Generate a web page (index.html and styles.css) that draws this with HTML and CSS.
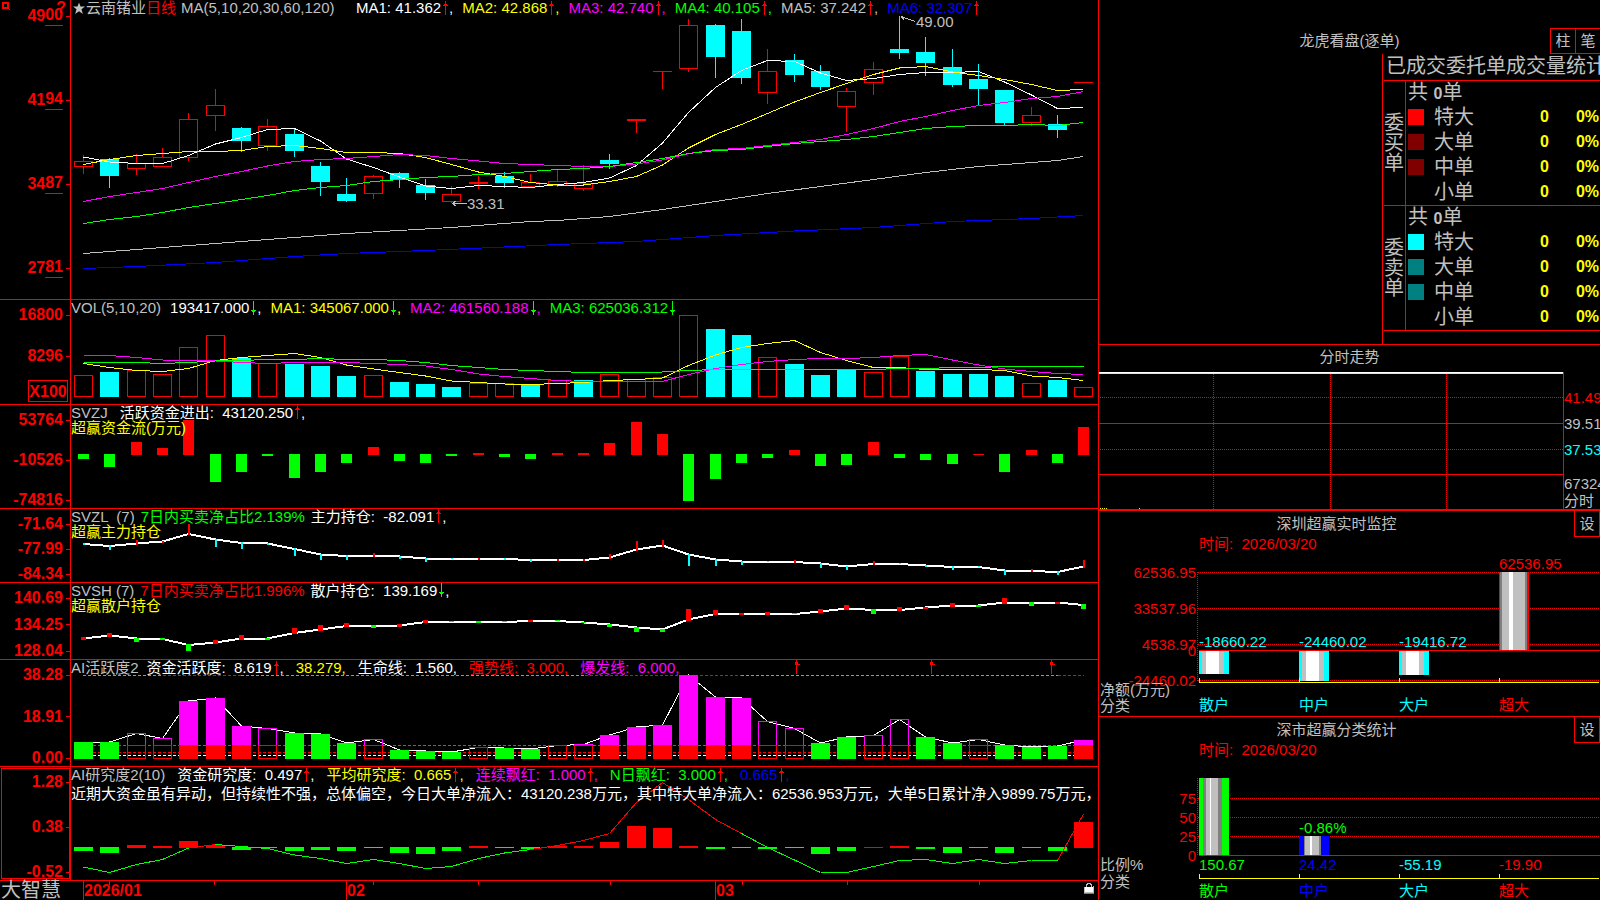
FILE: index.html
```html
<!DOCTYPE html>
<html lang="zh-CN">
<head>
<meta charset="utf-8">
<title>大智慧 - 云南锗业 日线</title>
<link rel="stylesheet" href="styles.css">
</head>
<body>
<svg class="defs" aria-hidden="true">
  <symbol id="up" viewBox="0 0 8 15"><path d="M4.5 0V14" stroke="#f00"/><path d="M4 1h1v2h1v1h1v1h-5v-1h1v-1h1z" fill="#f00"/></symbol>
  <symbol id="down" viewBox="0 0 8 15"><path d="M4.5 0V14" stroke="#0f0"/><path d="M4 13h1v-2h1v-1h1v-1h-5v1h1v1h1z" fill="#0f0"/></symbol>
</svg>

<div class="terminal">
  <main class="charts">
    <section class="panel">
      <div class="axis axis-price">
        <svg class="marker" viewBox="0 0 70 16" aria-hidden="true"><rect x="3" y="3" width="5" height="5" fill="none" stroke="#f00" stroke-width="2"/><path d="M9 9h1v1h-1z" fill="#f00"/></svg>
        <b class="help">?</b>
        <span class="tick">49<u>00</u></span><span class="tick">41<u>94</u></span><span class="tick">34<u>87</u></span><span class="tick">27<u>81</u></span>
      </div>
      <div class="plot">
        <svg id="price" viewBox="71 0 1027 299" preserveAspectRatio="none"></svg>
        <header class="legend">
          <h1><svg class="star" viewBox="0 0 12 14"><path d="M6 1.500l1.500 4H12L8.500 8.300 9.800 13 6 10.300 2.200 13 3.500 8.300 0 5.500h4.500z" fill="#c0c0c0"/></svg>云南锗业<span class="red">日线</span></h1>
          <span class="params">MA(5,10,20,30,60,120)</span>
          <span class="white">MA1: 41.362<svg class="arrow"><use href="#up"/></svg>,</span>
          <span class="yellow">MA2: 42.868<svg class="arrow"><use href="#up"/></svg>,</span>
          <span class="magenta">MA3: 42.740<svg class="arrow"><use href="#up"/></svg>,</span>
          <span class="green">MA4: 40.105<svg class="arrow"><use href="#up"/></svg>,</span>
          <span>MA5: 37.242<svg class="arrow"><use href="#up"/></svg>,</span>
          <span class="blue">MA6: 32.307<svg class="arrow"><use href="#up"/></svg></span>
        </header>
      </div>
    </section>

    <section class="panel">
      <div class="axis axis-volume">
        <span class="tick">16800</span><span class="tick">8296</span><span class="unit">X100</span>
      </div>
      <div class="plot">
        <svg id="volume" viewBox="71 300 1027 104" preserveAspectRatio="none"></svg>
        <header class="legend">
          <span>VOL(5,10,20)</span>
          <span class="white">193417.000<svg class="arrow"><use href="#down"/></svg>,</span>
          <span class="yellow">MA1: 345067.000<svg class="arrow"><use href="#down"/></svg>,</span>
          <span class="magenta">MA2: 461560.188<svg class="arrow"><use href="#down"/></svg>,</span>
          <span class="green">MA3: 625036.312<svg class="arrow"><use href="#down"/></svg></span>
        </header>
      </div>
    </section>

    <section class="panel">
      <div class="axis"><span class="tick">53764</span><span class="tick">-10526</span><span class="tick">-74816</span></div>
      <div class="plot">
        <svg id="flow" viewBox="71 405 1027 103" preserveAspectRatio="none"></svg>
        <header class="legend tight">
          <span class="spaced">SVZJ</span>
          <span class="white">活跃资金进出:  43120.250<svg class="arrow"><use href="#up"/></svg>,</span>
          <p class="yellow">超赢资金流(万元)</p>
        </header>
      </div>
    </section>

    <section class="panel">
      <div class="axis"><span class="tick">-71.64</span><span class="tick">-77.99</span><span class="tick">-84.34</span></div>
      <div class="plot">
        <svg id="main-hold" viewBox="71 509 1027 73" preserveAspectRatio="none"></svg>
        <header class="legend tight">
          <span>SVZL  (7)</span>
          <span class="green">7日内买卖净占比2.139%</span>
          <span class="white">主力持仓:  -82.091<svg class="arrow"><use href="#up"/></svg>,</span>
          <p class="yellow">超赢主力持仓</p>
        </header>
      </div>
    </section>

    <section class="panel">
      <div class="axis"><span class="tick">140.69</span><span class="tick">134.25</span><span class="tick">128.04</span></div>
      <div class="plot">
        <svg id="retail-hold" viewBox="71 583 1027 76" preserveAspectRatio="none"></svg>
        <header class="legend tight">
          <span>SVSH (7)</span>
          <span class="red">7日内买卖净占比1.996%</span>
          <span class="white">散户持仓:  139.169<svg class="arrow"><use href="#down"/></svg>,</span>
          <p class="yellow">超赢散户持仓</p>
        </header>
      </div>
    </section>

    <section class="panel">
      <div class="axis"><span class="tick">38.28</span><span class="tick">18.91</span><span class="tick">0.00</span></div>
      <div class="plot">
        <svg id="activity" viewBox="71 660 1027 106" preserveAspectRatio="none"></svg>
        <header class="legend wide">
          <span class="close">AI活跃度2</span>
          <span class="white">资金活跃度:  8.619<svg class="arrow"><use href="#up"/></svg>,</span>
          <span class="yellow">38.279,</span>
          <span class="white">生命线:  1.560,</span>
          <span class="red">强势线:  3.000,</span>
          <span class="magenta">爆发线:  6.000,</span>
        </header>
      </div>
    </section>

    <section class="panel">
      <div class="axis selected"><span class="tick">1.28</span><span class="tick">0.38</span><span class="tick">-0.52</span></div>
      <div class="plot">
        <svg id="research" viewBox="71 767 1027 113" preserveAspectRatio="none"></svg>
        <header class="legend wide">
          <span>AI研究度2(10)</span>
          <span class="white">资金研究度:  0.497<svg class="arrow"><use href="#up"/></svg>,</span>
          <span class="yellow">平均研究度:  0.665<svg class="arrow"><use href="#up"/></svg>,</span>
          <span class="magenta">连续飘红:  1.000<svg class="arrow"><use href="#up"/></svg>,</span>
          <span class="green">N日飘红:  3.000<svg class="arrow"><use href="#up"/></svg>,</span>
          <span class="blue">0.665<svg class="arrow"><use href="#up"/></svg>,</span>
          <p class="comment white">近期大资金虽有异动，但持续性不强，总体偏空，今日大单净流入：43120.238万元，其中特大单净流入：62536.953万元，大单5日累计净入9899.75万元，</p>
        </header>
      </div>
    </section>

    <footer class="timeline">
      <strong class="brand">大智慧</strong>
      <div class="dates">
        <svg id="dates" viewBox="71 881 1027 19" preserveAspectRatio="none"></svg>
        <ol class="months"><li>2026/01</li><li>02</li><li>03</li></ol>
        <svg class="lock" viewBox="0 0 11 12" aria-label="锁定"><path d="M3.500 5V2.500h1V1.500h3v1h1V5" fill="none" stroke="#c0c0c0"/><path d="M2 5h8v5H2z" fill="#fff"/><path d="M1 5.500h1M1.500 5v5h9V4" fill="none" stroke="#c0c0c0"/><path d="M1 11.500h10" stroke="#808080"/></svg>
      </div>
    </footer>
  </main>

  <aside class="side">
    <section class="orders">
      <header class="orders-head">
        <h2>龙虎看盘(逐单)</h2>
        <div class="switch"><button type="button">柱</button><button type="button">笔</button></div>
      </header>
      <div class="stats">
        <table>
          <caption>已成交委托单成交量统计</caption>
          <colgroup><col class="c-side"><col class="c-key"><col class="c-name"><col class="c-count"><col class="c-pct"></colgroup>
          <tbody>
            <tr><th class="side-label" rowspan="5" scope="rowgroup">委买单</th><td class="total" colspan="4">共 <b>0</b>单</td></tr>
            <tr><td class="key"><i class="swatch s-red"></i></td><th scope="row">特大</th><td class="count">0</td><td class="pct">0%</td></tr>
            <tr><td class="key"><i class="swatch s-maroon"></i></td><th scope="row">大单</th><td class="count">0</td><td class="pct">0%</td></tr>
            <tr><td class="key"><i class="swatch s-maroon"></i></td><th scope="row">中单</th><td class="count">0</td><td class="pct">0%</td></tr>
            <tr><td class="key"></td><th scope="row">小单</th><td class="count">0</td><td class="pct">0%</td></tr>
          </tbody>
          <tbody>
            <tr><th class="side-label" rowspan="5" scope="rowgroup">委卖单</th><td class="total" colspan="4">共 <b>0</b>单</td></tr>
            <tr><td class="key"><i class="swatch s-cyan"></i></td><th scope="row">特大</th><td class="count">0</td><td class="pct">0%</td></tr>
            <tr><td class="key"><i class="swatch s-teal"></i></td><th scope="row">大单</th><td class="count">0</td><td class="pct">0%</td></tr>
            <tr><td class="key"><i class="swatch s-teal"></i></td><th scope="row">中单</th><td class="count">0</td><td class="pct">0%</td></tr>
            <tr><td class="key"></td><th scope="row">小单</th><td class="count">0</td><td class="pct">0%</td></tr>
          </tbody>
        </table>
      </div>
    </section>

    <section class="intraday">
      <h2>分时走势</h2>
      <svg viewBox="1099 372 501 137" preserveAspectRatio="none">
        <g stroke="#f00" fill="none">
          <path d="M1099 423.500H1563M1099 474.500H1563M1563.500 372V509"/>
          <path stroke-dasharray="1 1" d="M1100 397.500H1563M1100 449.500H1563M1213.500 374V509M1330.500 374V509M1446.500 374V509"/>
        </g>
        <path d="M1099 372.500H1563" stroke="#fff"/><path d="M1099 373.500H1563" stroke="#ff0"/>
        <path d="M1100 508.500h8M1139 508.500h1" stroke="#ff0" stroke-dasharray="1 1"/>
        <g class="label">
          <text x="1564" y="403" fill="#f00">41.49</text>
          <text x="1564" y="429">39.51</text>
          <text x="1564" y="455" fill="#0ff">37.53</text>
          <text x="1564" y="489">67324</text>
          <text x="1564" y="506">分时</text>
        </g>
      </svg>
    </section>

    <section class="stat">
      <header><h2>深圳超赢实时监控</h2><button type="button">设</button></header>
      <svg viewBox="1099 536 501 180" preserveAspectRatio="none">
        <g stroke="#f00" fill="none">
          <path stroke-dasharray="1 1" d="M1198 572.500H1600M1198 608.500H1600M1198 644.500H1600M1198 680.500H1600M1197.500 572V681"/>
          <path d="M1199 650.500H1600"/>
        </g>
        <g id="net-bars"></g>
        <path d="M1199.500 678V682.500H1599M1299.500 678v4M1399.500 678v4M1499.500 678v4" stroke="#ff0" fill="none"/>
        <g class="label">
          <text x="1199" y="549" fill="#f00">时间:  2026/03/20</text>
          <g fill="#f00" text-anchor="end"><text x="1196" y="578">62536.95</text><text x="1196" y="614">33537.96</text><text x="1196" y="650">4538.97</text><text x="1196" y="656">0</text><text x="1196" y="686">-24460.02</text></g>
          <text x="1100" y="695">净额(万元)</text><text x="1100" y="711">分类</text>
          <g fill="#0ff"><text x="1199" y="647">-18660.22</text><text x="1299" y="647">-24460.02</text><text x="1399" y="647">-19416.72</text><text x="1199" y="710">散户</text><text x="1299" y="710">中户</text><text x="1399" y="710">大户</text></g>
          <g fill="#f00"><text x="1499" y="569">62536.95</text><text x="1499" y="710">超大</text></g>
        </g>
      </svg>
    </section>

    <section class="stat last">
      <header><h2>深市超赢分类统计</h2><button type="button">设</button></header>
      <svg viewBox="1099 742 501 158" preserveAspectRatio="none">
        <g stroke="#f00" fill="none">
          <path stroke-dasharray="1 1" d="M1198 798.500H1600M1198 817.500H1600M1198 836.500H1600M1197.500 778V855"/>
          <path d="M1199 855.500H1600"/>
        </g>
        <g id="ratio-bars"></g>
        <path d="M1199.500 874V878.500H1599M1299.500 874v4M1399.500 874v4M1499.500 874v4" stroke="#ff0" fill="none"/>
        <g class="label">
          <text x="1199" y="755" fill="#f00">时间:  2026/03/20</text>
          <g fill="#f00" text-anchor="end"><text x="1196" y="804">75</text><text x="1196" y="823">50</text><text x="1196" y="842">25</text><text x="1196" y="861">0</text></g>
          <text x="1100" y="870">比例%</text><text x="1100" y="887">分类</text>
          <g fill="#0f0"><text x="1299" y="833">-0.86%</text><text x="1199" y="870">150.67</text><text x="1199" y="896">散户</text></g>
          <g fill="#00f"><text x="1299" y="870">24.42</text><text x="1299" y="896">中户</text></g>
          <g fill="#0ff"><text x="1399" y="870">-55.19</text><text x="1399" y="896">大户</text></g>
          <g fill="#f00"><text x="1499" y="870">-19.90</text><text x="1499" y="896">超大</text></g>
        </g>
      </svg>
    </section>
  </aside>
</div>
<script src="charts.js"></script>
</body>
</html>
```
FILE: styles.css
```css
* { box-sizing: border-box; }
body {
  margin: 0;
  background: #000;
  color: #c0c0c0;
  font: 15px/16px "Liberation Sans", "Noto Sans CJK SC", sans-serif;
}
h1, h2, p, ol { margin: 0; padding: 0; font-size: inherit; font-weight: normal; list-style: none; }
svg { display: block; shape-rendering: crispEdges; }
.defs { position: absolute; width: 0; height: 0; }

.white { color: #fff; }
.yellow { color: #ff0; }
.magenta { color: #f0f; }
.green { color: #0f0; }
.blue { color: #00f; }
.red { color: #f00; }

.terminal {
  display: grid;
  grid-template-columns: minmax(0, 1fr) 502px;
  height: 100vh;
  min-height: 720px;
  overflow: hidden;
}
.charts {
  display: grid;
  grid-template-rows: 300fr 105fr 104fr 74fr 77fr 107fr 114fr 19fr;
  min-height: 0;
}
.panel {
  display: grid;
  grid-template-columns: 71px minmax(0, 1fr);
  min-height: 0;
  border-bottom: 1px solid #f00;
}

/* value axis */
.axis {
  position: relative;
  display: flex;
  flex-direction: column;
  justify-content: space-between;
  padding-top: 7px;
  border-right: 1px solid #f00;
  color: #f00;
  font-size: 16px;
  font-weight: bold;
  text-align: right;
}
.tick { display: flex; justify-content: flex-end; align-items: center; height: 16px; }
.tick::after { content: ""; width: 4px; height: 1px; margin-left: 3px; background: #f00; }
.tick u { height: 20px; border-bottom: 1px solid #f00; text-decoration: none; line-height: 18px; }
.axis-price { padding: 8px 0 23px; }
.axis-volume { display: grid; grid-template: 41fr 32fr 22px / 1fr; justify-content: stretch; padding-bottom: 2px; }
.unit { justify-self: end; width: 40px; margin-right: 2px; border: 1px solid #f00; line-height: 21px; text-align: center; }
.selected { outline: 1px solid #f00; outline-offset: -2px; }
.marker { position: absolute; top: 0; left: 0; width: 70px; height: 16px; }
.help { position: absolute; top: 0; right: 4px; }

/* plot area with its legend laid over it */
.plot, .dates { display: grid; grid-template: minmax(0, 1fr) / minmax(0, 1fr); min-height: 0; overflow: hidden; }
.plot > *, .dates > * { grid-area: 1 / 1; min-height: 0; }
.plot > svg, .dates > svg { width: 100%; height: 100%; }
.legend {
  display: flex;
  flex-wrap: wrap;
  align-content: flex-start;
  gap: 0 9px;
  white-space: nowrap;
}
.legend > * { display: flex; align-items: center; height: 16px; }
.legend.tight { column-gap: 6px; }
.legend.tight > * { height: 15px; }
.legend.wide { column-gap: 12px; }
.legend > p { flex-basis: 100%; }
.legend > span { white-space: pre; }
.legend .spaced { margin-right: 6px; }
.legend .close { margin-right: -4px; }
.legend h1 { margin-right: -4px; }
.legend .params { width: 166px; }
.legend .comment { height: 20px; padding-top: 2px; }
.arrow { width: 8px; height: 15px; }
.star { width: 12px; height: 14px; margin: 0 1px 0 2px; shape-rendering: auto; }

/* time axis */
.timeline { display: grid; grid-template-columns: 71px minmax(0, 1fr); }
.brand { padding-left: 1px; font-size: 20px; line-height: 19px; font-weight: normal; }
.months {
  display: grid;
  grid-template-columns: 263fr 369fr 383fr;
  padding-left: 12px;
  color: #f00;
  font-size: 16px;
  font-weight: bold;
  line-height: 19px;
}
.months li { border-left: 1px solid #f00; }
.lock { justify-self: end; }
.dates > .lock { width: 11px; height: 12px; margin: 1px 4px 0 0; }

/* right column */
.side {
  display: grid;
  grid-template-rows: 345fr 166fr 206fr 183fr;
  min-width: 0;
  min-height: 0;
  border-left: 1px solid #f00;
}
.side > section { min-height: 0; overflow: hidden; }
.side button {
  padding: 0;
  border: 1px solid #f00;
  border-radius: 0;
  background: #000;
  color: #c0c0c0;
  font: inherit;
}
.side h2 { text-align: center; }
.label { fill: #c0c0c0; font-size: 15px; }
.label text { white-space: pre; }

.orders { display: flex; flex-direction: column; border-bottom: 1px solid #f00; }
.orders-head { display: grid; grid-template-columns: 50px 1fr 50px; flex: none; height: 54px; padding-top: 28px; }
.orders-head h2 { grid-column: 2; line-height: 26px; }
.switch { display: flex; }
.switch button { width: 26px; height: 26px; flex: none; }
.switch button + button { margin-left: -1px; }
.stats { flex: 1; align-self: flex-end; width: 218px; border-left: 1px solid #f00; padding-left: 1px; overflow: hidden; white-space: nowrap; }
.stats table { width: 222px; table-layout: fixed; border-collapse: separate; border-spacing: 0; font-size: 20px; line-height: 20px; border-bottom: 1px solid #f00; }
.c-side { width: 22px; }
.c-key { width: 28px; }
.c-name { width: 60px; }
.c-count { width: 55px; }
.stats caption { height: 26px; padding-left: 2px; line-height: 24px; text-align: left; }
.stats th { padding: 0 0 2px; font-weight: normal; text-align: left; }
.stats td { height: 25px; padding: 0 0 2px; }
.stats tr:first-child > * { border-top: 1px solid #f00; padding-bottom: 0; }
.stats .side-label { padding: 0 1px 0 0; border-right: 1px solid #f00; white-space: normal; }
.stats .total { padding-left: 2px; }
.stats b { font-size: 16px; }
.stats .key { padding-left: 2px; }
.stats .count, .stats .pct { color: #ff0; font-size: 16px; font-weight: bold; text-align: right; }
.stats .pct { padding-right: 7px; }
.swatch { display: block; width: 16px; height: 16px; }
.s-red { background: #f00; }
.s-maroon { background: #800000; }
.s-cyan { background: #0ff; }
.s-teal { background: #008080; }

.intraday { display: grid; grid-template-rows: 27fr 137fr; border-bottom: 2px solid #f00; }
.intraday h2 { padding-top: 4px; }
.intraday svg, .stat svg { width: 100%; height: 100%; min-height: 0; }
.stat { display: grid; grid-template-rows: 25px minmax(0, 1fr); border-bottom: 1px solid #f00; }
.stat.last { border-bottom: 0; }
.stat header { display: grid; grid-template-columns: 1fr 26px; line-height: 25px; }
.stat button { border-top: 0; }
```
FILE: charts.js
```js
const RED = "#f00", CYAN = "#0ff", GREEN = "#0f0", MAGENTA = "#f0f", GREY = "#c0c0c0", DARK = "#808080", WHITE = "#fff", YELLOW = "#ff0", BLUE = "#00f";
const x = i => Math.round(83 + 26.32 * i) + 0.5;
const box = (left, top, w, h, fill) => `<rect x="${left}" y="${top}" width="${w}" height="${h}" fill="${fill}"/>`;
const frame = (i, top, bottom, color) => `<rect x="${x(i) - 9}" y="${top}" width="18" height="${bottom - top}" fill="none" stroke="${color}"/>`;
const path = (points, color, width = 1) => `<path d="M${points.map(p => p.join(" ")).join("L")}" fill="none" stroke="${color}" stroke-width="${width}"/>`;
const line = (values, color, width) => path(values.map((v, i) => [x(i), v]), color, width);
const sparse = (pairs, color) => path(pairs.map(([i, v]) => [x(i), v]), color);
const draw = (id, html) => { document.getElementById(id).innerHTML = html; };

// kind, body top, body bottom, high, low
const candles = [
  ["r",161.5,166.5,155,174],["c",159,176,158,188],["r",163.5,168.5,154,175],["r",157.5,166.5,148,166],["r",119.5,157.5,113,161],
  ["r",105.5,115.5,89,131],["c",128,141,127,152],["r",126.5,145.5,119,151],["c",134,151,129,157],["c",166,182,162,196],
  ["c",194,201,178,202],["r",176.5,193.5,175,199],["c",173,180,172,188],["c",185,193,179,200],["r",194.5,201.5,186,203],
  ["r",182.5,183.5,176,189],["c",176,183,172,188],["r",182.5,186.5,174,187],["r",181.5,185.5,170,187],["r",183.5,188.5,165,191],
  ["c",160,164,154,169],["r",119.5,120.5,119,133],["r",71.5,71.5,71,89],["r",25.5,68.5,19,72],["c",25,57,24,78],
  ["c",31,78,19,84],["r",71.5,92.5,49,104],["c",60,75,54,82],["c",71,87,65,90],["r",91.5,106.5,88,132],
  ["r",69.5,82.5,62,95],["c",49,53,16,59],["c",52,63,37,76],["c",67,85,49,87],["c",79,89,64,105],
  ["c",90,123,90,125],["r",115.5,122.5,107,126],["c",124,130,115,138],["r",82.5,82.5,82,83]
];
let html = candles.map(([kind, top, bottom, high, low], i) => kind === "c"
  ? path([[x(i), high], [x(i), low]], CYAN) + box(x(i) - 9.5, top, 19, bottom - top, CYAN)
  : path([[x(i), high], [x(i), top]], RED) + path([[x(i), bottom], [x(i), low]], RED) +
    (top === bottom ? path([[x(i) - 9.5, top], [x(i) + 9.5, top]], RED) : frame(i, top, bottom, RED))
).join("");
html += sparse([[0,268.5],[2,266.5],[5,262.5],[8,256.5],[10,253.5],[13,250.5],[16,247],[18,244.5],[21,241.5],[24,235.5],[27,231],[30,227.5],[33,221.5],[36,218.5],[38,215.5]], BLUE);
html += sparse([[0,253.5],[5,243.5],[10,233.5],[14,227.5],[17,221.5],[18,220.5],[20,216.5],[22,209.5],[24,201.5],[26,193.5],[28,186.5],[30,179.5],[32,172.5],[34,166.5],[36,162.5],[37,160.5],[38,156.5]], GREY);
html += line([157,162,163.5,163.5,155.5,144,137.5,129.5,128.5,141,159,167.5,177,186,188.5,185.5,186.5,187.5,184.5,182.5,178,165.5,143,112.5,87.5,70.5,60.5,61.5,73,80.5,78.5,74.5,72.5,72.5,71.5,82,95,108.5,107.5], WHITE);
html += line([164.5,159.5,155.5,153.5,151.5,151.5,150.5,146.5,145.5,148.5,152.5,152.5,153.5,157.5,164.5,172,176.5,182.5,185,185,181.5,176.5,165,148,134.5,124.5,113.5,102,92.5,83.5,74.5,68,66.5,72,75.5,79.5,84.5,90.5,89.5], YELLOW);
html += line([201.5,196.5,192.5,188.5,182.5,176.5,171.5,166,161.5,159.5,158.5,156.5,154.5,155.5,158.5,161,163.5,164.5,165.5,166.5,166.5,164,160,153.5,149.5,148.5,145.5,142.5,139.5,134.5,128.5,121.5,116.5,110.5,105.5,102.5,98.5,96.5,91.5], MAGENTA);
html += line([223.5,219.5,216.5,212.5,207.5,203.5,199.5,195.5,190.5,187.5,185.5,181.5,179.5,177.5,176.5,174.5,173.5,171.5,169.5,168.5,166.5,162.5,158.5,153.5,150.5,149.5,146.5,143.5,141.5,139.5,136.5,132.5,128.5,126.5,125.5,125.5,124.5,125.5,122.5], GREEN);
html += `<path d="M901 16.500L915 21.500M901 16.500l3 3M467 203.500H452.500l4-3M452.500 203.500l4 3" fill="none" stroke="${GREY}"/>`;
html += `<g class="label"><text x="916" y="27">49.00</text><text x="467" y="209">33.31</text></g>`;
draw("price", html);

const volumes = [375.5,372,370.5,374.5,347.5,335.5,358,363.5,364,366,376,375.5,382,384,387,383.5,383.5,385,380.5,380,374.5,379.5,377.5,315.5,329,335,357.5,364,375,370,372.5,356.5,371,374,374,376,383.5,380,387.5];
const redVolume = new Set([0, 2, 3, 4, 5, 7, 11, 15, 16, 18, 20, 21, 22, 23, 26, 30, 31, 36, 38]);
html = volumes.map((top, i) => redVolume.has(i) ? frame(i, top, 396.5, RED) : box(x(i) - 9.5, top, 19, 397 - top, CYAN)).join("");
html += line([363.5,367.5,370.5,371.5,368.5,360.5,357.5,355.5,353.5,357.5,365,369,372.5,376,381,382.5,384,384.5,383.5,382.5,380.5,379.5,378,365.5,355,347.5,343.5,340.5,352.5,360.5,367.5,367.5,369.5,369.5,369.5,370.5,376,377.5,380.5], YELLOW);
html += line([355.5,355.5,357.5,360,360.5,361,362.5,363.5,362.5,362.5,362.5,363.5,364.5,366,369.5,374,376.5,378.5,380.5,381.5,381.5,381.5,381.5,374.5,368.5,364.5,361.5,359.5,358.5,358.5,357.5,355.5,354.5,360,365,369,371.5,373.5,374.5], MAGENTA);
html += line([362.5,362.5,362.5,363.5,362.5,361,360.5,359.5,359.5,358.5,359.5,359.5,360.5,362.5,365.5,367.5,369.5,370.5,371.5,372.5,372.5,372.5,372,370.5,369.5,369.5,369.5,369.5,369.5,369.5,369.5,368.5,368.5,367.5,367.5,366.5,366.5,366.5,366.5], GREEN);
draw("volume", html);

// signed bars: red above the base line, green below it
const signed = (values, base, width) => values.map((v, i) => v > 0
  ? box(x(i) - width / 2, base + 1 - v, width, v, RED)
  : box(x(i) - width / 2, base, width, -v, GREEN)).join("");
draw("flow", signed([-5,-13,13,7,35,-28,-18,-2,-24,-18,-9,8,-7,-9,-2,2,-3,-5,2,2,12,33,21,-47,-25,-9,-4,5,-12,-11,13,-4,-6,-10,1,-18,5,-9,28], 454, 11));

// holding lines with a mark at each day
const marked = (levels, marks, width, downColor) => line(levels, WHITE, 2) + marks.map((m, i) => m > 0
  ? box(x(i) - width / 2, Math.round(levels[i]) - m, width, m + 1, RED)
  : box(x(i) - width / 2, Math.round(levels[i]) - 1, width, 1 - m, downColor)).join("");
draw("main-hold", marked(
  [544,546,543.5,541.5,534,539.5,543,543.5,549,554.5,556,556,556.5,558.5,559,559,559,560,560,560,557.5,549.5,545.5,554.5,559.5,561.5,562,562,563.5,566.5,564,564,565.5,567,567,570.5,571,572,566.5],
  [-1,-4,4,1,10,-7,-6,-1,-7,-5,-4,3,-2,-3,0,1,-1,-2,1,1,4,9,6,-11,-6,-3,0,2,-4,-3,3,0,-1,-3,0,-4,2,-3,7], 2, CYAN));
draw("retail-hold", marked(
  [638.5,635.5,638.5,639,645,642.5,638.5,638.5,633,629.5,626,626,625.5,622,622,622,622,621,621,622.5,624.5,627.5,629.5,619.5,614,614,614,614,611.5,608.5,610,610,607.5,605.5,605.5,602.5,602.5,602.5,605],
  [2,3,-3,-1,-6,3,4,-1,5,5,3,-2,2,2,0,-1,0,1,0,0,-2,-4,-2,11,4,1,2,0,3,4,-4,3,1,3,-1,5,-3,1,-4], 5, GREEN));

// kind: g green, m magenta over red, o outlined
const activity = "g742 g742 o733.5 o738.5 m701 m698 m726 o728.5 g733 g734 g743 o739.5 g750 g751 g752 o747.5 g748 g749 o745.5 o744.5 m735 m727 m725 m675 m697 m698 o721.5 o728.5 g743 g737 o735.5 o719.5 g737 g743 o739.5 g745 g747 g746 m740"
  .split(" ").map(s => [s[0], Number(s.slice(1))]);
const dashed = (from, to, y, color) => `<path d="M${from} ${y}H${to}" stroke="${color}" stroke-dasharray="3 2"/>`;
html = dashed(83, 1084, 745.5, MAGENTA) + dashed(83, 1084, 752.5, RED) + dashed(83, 1084, 755.5, WHITE);
html += [[83,163,GREEN],[163,241,RED],[241,585,GREEN],[585,741,RED],[741,1058,GREEN],[1058,1084,RED]].map(([a, b, c]) => dashed(a, b, 675.5, c)).join("");
html += line(activity.map(a => a[1]), WHITE);
html += activity.map(([kind, top], i) => {
  const left = x(i) - 9.5;
  if (kind === "g") return box(left, top, 19, 759 - top, GREEN);
  if (kind === "m") return box(left, top, 19, 745 - top, MAGENTA) + box(left, 745, 19, 14, RED);
  return (top < 745 ? frame(i, top, 745.5, MAGENTA) : "") + frame(i, Math.max(top, 745.5), 758.5, RED);
}).join("");
html += [796.5, 931.5, 1051.5].map(c => `<path d="M${c} 660V674M${c - 2} 664.500h5" stroke="${RED}"/>` + box(c - 1.5, 662, 3, 2, RED)).join("");
draw("activity", html);

const research = [867,872.5,864.5,859.5,848,844.5,846.5,848.5,855,858.5,863.5,859.5,863.5,868.5,866.5,858.5,853,849.5,845.5,840.5,833.5,802.5,782.5,799.5,819.5,833.5,847.5,860,872.5,872.5,866.5,860.5,859.5,863.5,859.5,863.5,860.5,860.5,814];
html = research.slice(1).map((v, i) => path([[x(i), research[i]], [x(i + 1), v]], i === 4 || (i > 16 && i < 25) || i === 37 ? RED : GREEN)).join("");
html = signed([-4,-6,3,2,7,3,-3,-1,-4,-3,-4,-1,-6,-7,-4,2,-1,-2,2,2,6,22,20,2,-2,-1,-2,-1,-7,-4,1,2,-2,-6,-1,-6,-1,-4,26], 847, 19) + html;
draw("research", html);

draw("dates", [109.5,214.5,373.5,478.5,610.5,742.5,847.5,979.5].map(c => path([[c, 881], [c, 885]], RED)).join(""));

// cylinder bars: stripes as [offset, width, color]
const cylinder = (left, top, bottom, color, stripes) => box(left, top, 30, bottom - top, color) +
  stripes.map(([dx, w, c]) => box(left + dx, top, w, bottom - top, c)).join("");
const light = [[3,22,GREY],[7,13,WHITE]];
draw("net-bars", cylinder(1199, 651, 674, CYAN, light) + cylinder(1299, 651, 681, CYAN, light) + cylinder(1399, 651, 675, CYAN, light) +
  cylinder(1499, 572, 650, RED, [[1,27,DARK],[3,23,GREY],[10,4,WHITE]]));
draw("ratio-bars", cylinder(1199, 778, 855, GREEN, [[4,19,DARK],[7,12,GREY],[11,1,WHITE]]) +
  cylinder(1299, 836, 855, BLUE, [[5,17,DARK],[6,14,GREY],[11,2,WHITE]]));
```
